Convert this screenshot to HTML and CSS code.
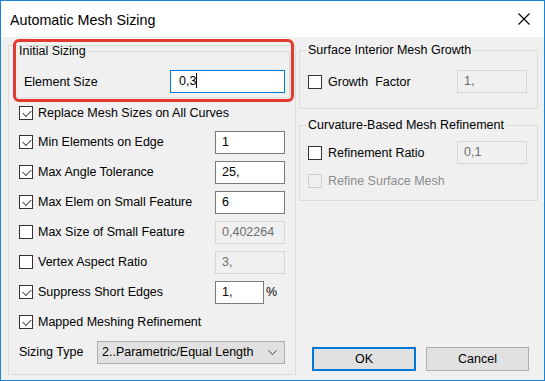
FILE: index.html
```html
<!DOCTYPE html>
<html lang="en">
<head>
	<meta charset="UTF-8">
	<title>Automatic Mesh Sizing</title>
	<link rel="stylesheet" href="styles.css">
</head>
<body>
	<div class="window">
		<div class="titlebar">
			<span class="title">Automatic Mesh Sizing</span>
			<svg class="close" width="12" height="12" viewBox="0 0 12 12">
				<path d="M0.5 0.5 L11.5 11.5 M11.5 0.5 L0.5 11.5" stroke="#000" stroke-width="1.1" fill="none"/>
			</svg>
		</div>
		<div class="content">
			<!-- left column -->
			<div class="panel">
				<fieldset class="group initial">
					<legend>Initial Sizing</legend>
					<div class="row tight">
						<span class="label">Element Size</span>
						<div class="field wide focus">0,3<i class="caret"></i></div>
					</div>
				</fieldset>

				<div class="row first">
					<span class="check on"></span><span class="label">Replace Mesh Sizes on All Curves</span>
				</div>
				<div class="row">
					<span class="check on"></span><span class="label">Min Elements on Edge</span>
					<div class="field">1</div>
				</div>
				<div class="row">
					<span class="check on"></span><span class="label">Max Angle Tolerance</span>
					<div class="field">25,</div>
				</div>
				<div class="row">
					<span class="check on"></span><span class="label">Max Elem on Small Feature</span>
					<div class="field">6</div>
				</div>
				<div class="row">
					<span class="check"></span><span class="label">Max Size of Small Feature</span>
					<div class="field off">0,402264</div>
				</div>
				<div class="row">
					<span class="check"></span><span class="label">Vertex Aspect Ratio</span>
					<div class="field off">3,</div>
				</div>
				<div class="row">
					<span class="check on"></span><span class="label">Suppress Short Edges</span>
					<div class="unit">
						<div class="field short">1,</div><span>%</span>
					</div>
				</div>
				<div class="row">
					<span class="check on"></span><span class="label">Mapped Meshing Refinement</span>
				</div>
				<div class="row">
					<span class="label plain">Sizing Type</span>
					<div class="select">
						<span>2..Parametric/Equal Length</span>
						<svg width="9" height="5" viewBox="0 0 9 5">
							<path d="M0.5 0.5 L4.5 4.5 L8.5 0.5" stroke="#444" stroke-width="1" fill="none"/>
						</svg>
					</div>
				</div>
			</div>

			<!-- right column -->
			<div class="side">
				<fieldset class="group growth">
					<legend>Surface Interior Mesh Growth</legend>
					<div class="row tight">
						<span class="check"></span><span class="label">Growth&nbsp; Factor</span>
						<div class="field off">1,</div>
					</div>
				</fieldset>
				<fieldset class="group curvature">
					<legend>Curvature-Based Mesh Refinement</legend>
					<div class="row tight">
						<span class="check"></span><span class="label">Refinement Ratio</span>
						<div class="field off">0,1</div>
					</div>
					<div class="row small">
						<span class="check dim"></span><span class="label dim">Refine Surface Mesh</span>
					</div>
				</fieldset>
				<div class="buttons">
					<div class="btn default">OK</div>
					<div class="btn">Cancel</div>
				</div>
			</div>
		</div>
		<!-- annotation round the Initial Sizing group -->
		<div class="highlight"></div>
	</div>
</body>
</html>
```

FILE: styles.css
```css
*{
	margin: 0;
	padding: 0;
	box-sizing: border-box;
}
body{
	font-family: "Liberation Sans", Arial, sans-serif;
	font-size: 12.5px;
	color: #000;
	background: #fff;
}
.window{
	position: relative;
	width: 545px;
	height: 381px;
	border: 1px solid #1883d7;
	background-color: #f0f0f0;
	display: flex;
	flex-direction: column;
}
.titlebar{
	height: 36px;
	background-color: #fff;
	display: flex;
	align-items: center;
	justify-content: space-between;
	padding: 0 14px 0 9px;
}
.title{
	font-size: 14.3px;
	margin-top: 1px;
}
.close{
	display: block;
}
.content{
	flex: 1;
	display: flex;
	padding: 8px 6px 5px 7px;
	gap: 3px;
}

/* left column */
.panel{
	width: 288px;
	height: 330px;
	border: 1px solid #dcdcdc;
	padding: 0 10px 0 9px;
}
.group{
	border: 1px solid #dcdcdc;
	min-width: 0;
}
.group legend{
	line-height: 14px;
	padding: 0 2px;
	margin-left: 0;
}
.initial{
	margin: -2px -5px 0 -3px;
	padding: 12px 4px 4px 8px;
}
.initial legend{
	margin-left: -7px;
}
.row{
	height: 30px;
	display: flex;
	align-items: center;
}
.row.first{
	height: 28px;
	margin-top: 1px;
}
.row.tight{
	height: 23px;
}
.row.small{
	height: 22px;
	margin-top: 6px;
}
.label{
	flex: 1;
	white-space: nowrap;
	margin-left: 5px;
}
.label.plain{
	flex: none;
	margin-left: 1px;
	width: 78px;
}
.initial .label{
	margin-left: 0;
}
.label.dim{
	color: #8d8d8d;
}
.check{
	width: 14px;
	height: 14px;
	border: 1px solid #333;
	background: #fff;
	flex: none;
	margin-left: 1px;
	position: relative;
}
.check.on::after{
	content: "";
	position: absolute;
	left: 2px;
	top: 1px;
	width: 7px;
	height: 4px;
	border-left: 1px solid #444;
	border-bottom: 1px solid #444;
	transform: translate(1px, 2px) rotate(-45deg);
	transform-origin: center;
}
.check.dim{
	border-color: #cfcfcf;
	background: #f0f0f0;
}
.field{
	width: 70px;
	height: 23px;
	border: 1px solid #7a7a7a;
	background: #fff;
	padding: 0 6px;
	line-height: 21px;
	flex: none;
	white-space: nowrap;
}
.field.wide{
	width: 115px;
	padding-left: 8px;
}
.field.focus{
	border-color: #0078d7;
}
.field.off{
	border-color: #d6d6d6;
	background: #f0f0f0;
	color: #6d6d6d;
}
.field.short{
	width: 49px;
}
.caret{
	display: inline-block;
	width: 1px;
	height: 15px;
	background: #000;
	vertical-align: -3px;
}
.unit{
	display: flex;
	align-items: center;
	width: 70px;
	flex: none;
}
.unit span{
	margin-left: 2px;
}
.select{
	width: 188px;
	height: 23px;
	border: 1px solid #adadad;
	background: #e1e1e1;
	display: flex;
	align-items: center;
	justify-content: space-between;
	padding: 0 7px 0 4px;
	white-space: nowrap;
}

/* right column */
.side{
	width: 239px;
	display: flex;
	flex-direction: column;
	margin-top: -2px;
}
.side .group{
	padding: 13px 10px 15px 7px;
}
.side .group legend{
	margin-left: -1px;
}
.side .label{
	margin-left: 6px;
}
.curvature{
	margin-top: 9px;
	padding-top: 9px !important;
	padding-bottom: 8px !important;
}
.buttons{
	margin-top: auto;
	margin-bottom: 4px;
	padding-left: 13px;
	display: flex;
	gap: 10px;
}
.btn{
	width: 104px;
	height: 24px;
	border: 1px solid #adadad;
	background: #e1e1e1;
	text-align: center;
	line-height: 22px;
}
.btn + .btn{
	width: 103px;
}
.btn.default{
	border: 2px solid #0078d7;
	line-height: 20px;
}

/* red annotation frame */
.highlight{
	position: absolute;
	left: 12px;
	top: 38px;
	width: 281px;
	height: 63px;
	border: 3px solid #e23a2f;
	border-radius: 6px;
	pointer-events: none;
}
```
